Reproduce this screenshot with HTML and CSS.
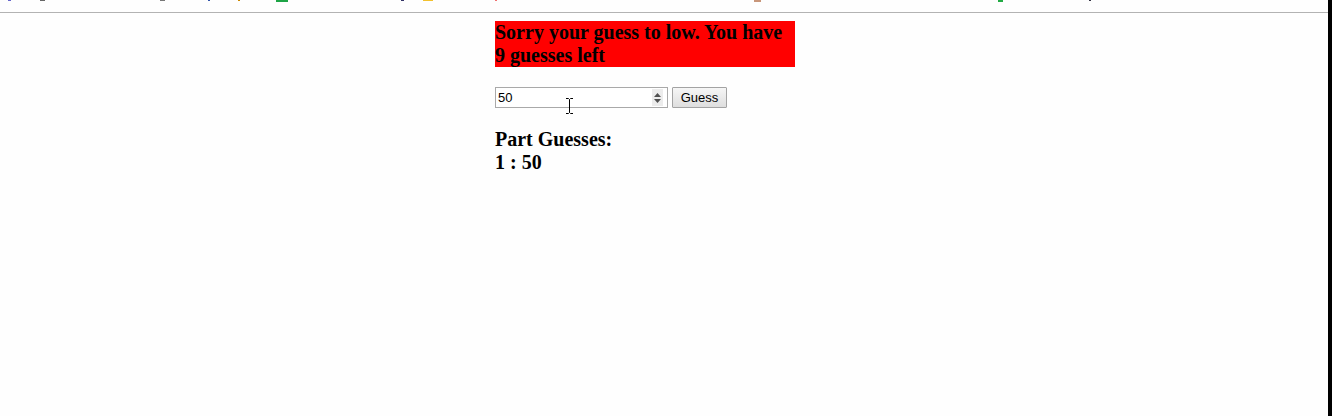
FILE: index.html
```html
<!DOCTYPE html>
<html>
<head>
<meta charset="utf-8">
<link rel="stylesheet" href="styles.css">
</head>
<body>
<div class="window">
  <div class="viewport">
    <div class="topstrip">
      <span class="frag f1"></span><span class="frag f2"></span><span class="frag f3"></span>
      <span class="frag f4"></span><span class="frag f5"></span><span class="frag f6"></span>
      <span class="frag f7"></span><span class="frag f8"></span><span class="frag f9"></span>
      <span class="frag f10"></span><span class="frag f11"></span><span class="frag f12"></span>
    </div>
    <main class="page">
      <div class="column">
        <div class="message">Sorry your guess to low. You have 9 guesses left</div>
        <form class="guess-form">
          <div class="number-field">
            <input class="number-input" type="text" value="50">
            <span class="spinner">
              <svg width="11" height="14" viewBox="0 0 11 14"><path d="M5.5 2 L9 6 L2 6 Z M2 8 L9 8 L5.5 12 Z" fill="#505050"/></svg>
            </span>
            <svg class="cursor" width="9" height="16" viewBox="0 0 9 16"><path d="M1 0.5 H3.5 L4.5 1.5 L5.5 0.5 H8 M4.5 1.5 V14.5 M1 15.5 H3.5 L4.5 14.5 L5.5 15.5 H8" stroke="#000" stroke-width="1" fill="none"/></svg>
          </div>
          <button class="guess-btn" type="button">Guess</button>
        </form>
        <div class="history">
          <div class="history-title">Part Guesses:</div>
          <div class="history-item">1 : 50</div>
        </div>
      </div>
    </main>
  </div>
  <div class="edge"></div>
</div>
</body>
</html>
```

FILE: styles.css
```css
html, body {
  margin: 0;
  padding: 0;
  height: 100%;
  background: #fefefe;
}
.window {
  display: flex;
  height: 416px;
  width: 1332px;
}
.viewport {
  flex: 1;
  display: flex;
  flex-direction: column;
}
.edge {
  width: 4px;
  background: #000;
}
.topstrip {
  height: 12px;
  border-bottom: 1px solid #b3b3b3;
  position: relative;
}
.frag {
  position: absolute;
  top: 0;
  height: 1px;
  width: 3px;
  background: #555;
}
.f1 { left: 8px; background: #6666cc; }
.f2 { left: 40px; width: 5px; background: #666; }
.f3 { left: 160px; width: 5px; background: #777; }
.f4 { left: 208px; width: 2px; background: #3355aa; }
.f5 { left: 238px; width: 2px; background: #cc8800; }
.f6 { left: 276px; width: 12px; height: 2px; background: #1ea446; }
.f7 { left: 401px; width: 3px; background: #333366; }
.f8 { left: 423px; width: 10px; background: #f2c12e; }
.f9 { left: 495px; width: 2px; background: #f07070; }
.f10 { left: 754px; width: 7px; height: 2px; background: #c8967a; }
.f11 { left: 998px; width: 5px; height: 2px; background: #22aa44; }
.f12 { left: 1089px; width: 2px; background: #334; }
.page {
  flex: 1;
  display: flex;
  justify-content: flex-start;
  padding-left: 495px;
  padding-top: 8px;
}
.column {
  width: 300px;
  display: flex;
  flex-direction: column;
  font-family: "Liberation Serif", "Times New Roman", serif;
  color: #000;
}
.message {
  background: #ff0000;
  font-weight: bold;
  font-size: 20px;
  line-height: 23px;
  height: 46px;
}
.guess-form {
  margin: 20px 0 0 0;
  display: flex;
  align-items: center;
  gap: 4px;
}
.number-field {
  position: relative;
  width: 171px;
  height: 19px;
  border: 1px solid #a9a9a9;
  background: #fff;
  display: flex;
  align-items: center;
}
.number-input {
  flex: 1;
  min-width: 0;
  border: none;
  outline: none;
  padding: 0 0 0 2px;
  margin: 0;
  height: 19px;
  font-family: "Liberation Sans", Arial, sans-serif;
  font-size: 13px;
  color: #000;
  background: transparent;
}
.spinner {
  width: 11px;
  height: 17px;
  margin-right: 4px;
  background: #ececec;
  display: flex;
  align-items: center;
  justify-content: center;
}
.cursor {
  position: absolute;
  left: 69px;
  top: 10px;
}
.guess-btn {
  width: 55px;
  height: 21px;
  margin: 0;
  padding: 0;
  border: 1px solid #a3a3a3;
  border-radius: 1px;
  background: linear-gradient(#f6f6f6, #dedede);
  font-family: "Liberation Sans", Arial, sans-serif;
  font-size: 13px;
  color: #000;
}
.history {
  margin-top: 20px;
  font-weight: bold;
  font-size: 20px;
  line-height: 23px;
}
```
